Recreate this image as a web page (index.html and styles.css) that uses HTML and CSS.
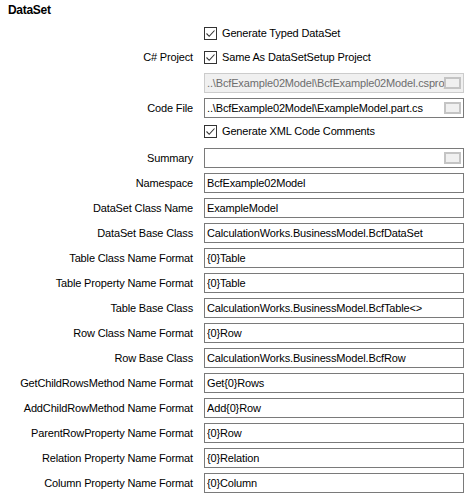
FILE: index.html
```html
<!DOCTYPE html>
<html>
<head>
<meta charset="utf-8">
<link rel="stylesheet" href="styles.css">
</head>
<body>
<div class="panel">
  <div class="title">DataSet</div>
  <div class="grid">
    <div class="label"></div>
    <label class="check"><span class="box"><svg width="11" height="11" viewBox="0 0 11 11"><path d="M1.5 5.5 L4.2 8.3 L9.5 2.5" fill="none" stroke="#333" stroke-width="1.1"/></svg></span>Generate Typed DataSet</label>

    <div class="label raise">C# Project</div>
    <label class="check raise"><span class="box"><svg width="11" height="11" viewBox="0 0 11 11"><path d="M1.5 5.5 L4.2 8.3 L9.5 2.5" fill="none" stroke="#333" stroke-width="1.1"/></svg></span>Same As DataSetSetup Project</label>

    <div class="label"></div>
    <div class="field disabled"><input type="text" value="..\BcfExample02Model\BcfExample02Model.csproj" disabled><span class="dots"></span></div>

    <div class="label">Code File</div>
    <div class="field"><input type="text" value="..\BcfExample02Model\ExampleModel.part.cs"><span class="dots"></span></div>

    <div class="label"></div>
    <label class="check raise2"><span class="box"><svg width="11" height="11" viewBox="0 0 11 11"><path d="M1.5 5.5 L4.2 8.3 L9.5 2.5" fill="none" stroke="#333" stroke-width="1.1"/></svg></span>Generate XML Code Comments</label>

    <div class="label">Summary</div>
    <div class="field"><input type="text" value=""><span class="dots"></span></div>

    <div class="label">Namespace</div>
    <div class="field"><input type="text" value="BcfExample02Model"></div>

    <div class="label">DataSet Class Name</div>
    <div class="field"><input type="text" value="ExampleModel"></div>

    <div class="label">DataSet Base Class</div>
    <div class="field"><input type="text" value="CalculationWorks.BusinessModel.BcfDataSet"></div>

    <div class="label">Table Class Name Format</div>
    <div class="field"><input type="text" value="{0}Table"></div>

    <div class="label">Table Property Name Format</div>
    <div class="field"><input type="text" value="{0}Table"></div>

    <div class="label">Table Base Class</div>
    <div class="field"><input type="text" value="CalculationWorks.BusinessModel.BcfTable&lt;&gt;"></div>

    <div class="label">Row Class Name Format</div>
    <div class="field"><input type="text" value="{0}Row"></div>

    <div class="label">Row Base Class</div>
    <div class="field"><input type="text" value="CalculationWorks.BusinessModel.BcfRow"></div>

    <div class="label">GetChildRowsMethod Name Format</div>
    <div class="field"><input type="text" value="Get{0}Rows"></div>

    <div class="label">AddChildRowMethod Name Format</div>
    <div class="field"><input type="text" value="Add{0}Row"></div>

    <div class="label">ParentRowProperty Name Format</div>
    <div class="field"><input type="text" value="{0}Row"></div>

    <div class="label">Relation Property Name Format</div>
    <div class="field"><input type="text" value="{0}Relation"></div>

    <div class="label">Column Property Name Format</div>
    <div class="field"><input type="text" value="{0}Column"></div>
  </div>
</div>
</body>
</html>
```
FILE: styles.css
```css
html, body {
  margin: 0;
  padding: 0;
  background: #ffffff;
}
.panel {
  font-family: "Liberation Sans", Arial, sans-serif;
  font-size: 11px;
  letter-spacing: -0.15px;
  color: #000;
  width: 471px;
  height: 496px;
  overflow: hidden;
}
.title {
  font-weight: bold;
  font-size: 12px;
  letter-spacing: -0.3px;
  padding: 3px 0 0 8px;
  height: 15px;
  line-height: 15px;
}
.grid {
  margin-top: 5px;
  display: grid;
  grid-template-columns: 193px 260px;
  column-gap: 11px;
  grid-auto-rows: 20px;
  row-gap: 5px;
}
.label {
  text-align: right;
  line-height: 20px;
  white-space: nowrap;
}
.label.raise {
  line-height: 18px;
}
.check {
  display: flex;
  align-items: center;
  gap: 5px;
  white-space: nowrap;
}
.check.raise {
  padding-bottom: 2px;
}
.check.raise2 {
  padding-bottom: 4px;
}
.box {
  width: 11px;
  height: 11px;
  border: 1px solid #333;
  background: #fff;
  display: flex;
}
.field {
  position: relative;
}
.field input {
  box-sizing: border-box;
  width: 100%;
  height: 20px;
  margin: 0;
  border: 1px solid #7a7a7a;
  padding: 0 2px;
  font-family: "Liberation Sans", Arial, sans-serif;
  font-size: 11px;
  letter-spacing: -0.15px;
  color: #000;
  background: #fff;
  outline: none;
}
.field.disabled input {
  border-color: #cccccc;
  background: #f0f0f0;
  color: #6d6d6d;
}
.dots {
  position: absolute;
  right: 3px;
  top: 4px;
  width: 13px;
  height: 8px;
  border: 2px solid #c4c4c4;
  background: #f0f0f0;
}
```
